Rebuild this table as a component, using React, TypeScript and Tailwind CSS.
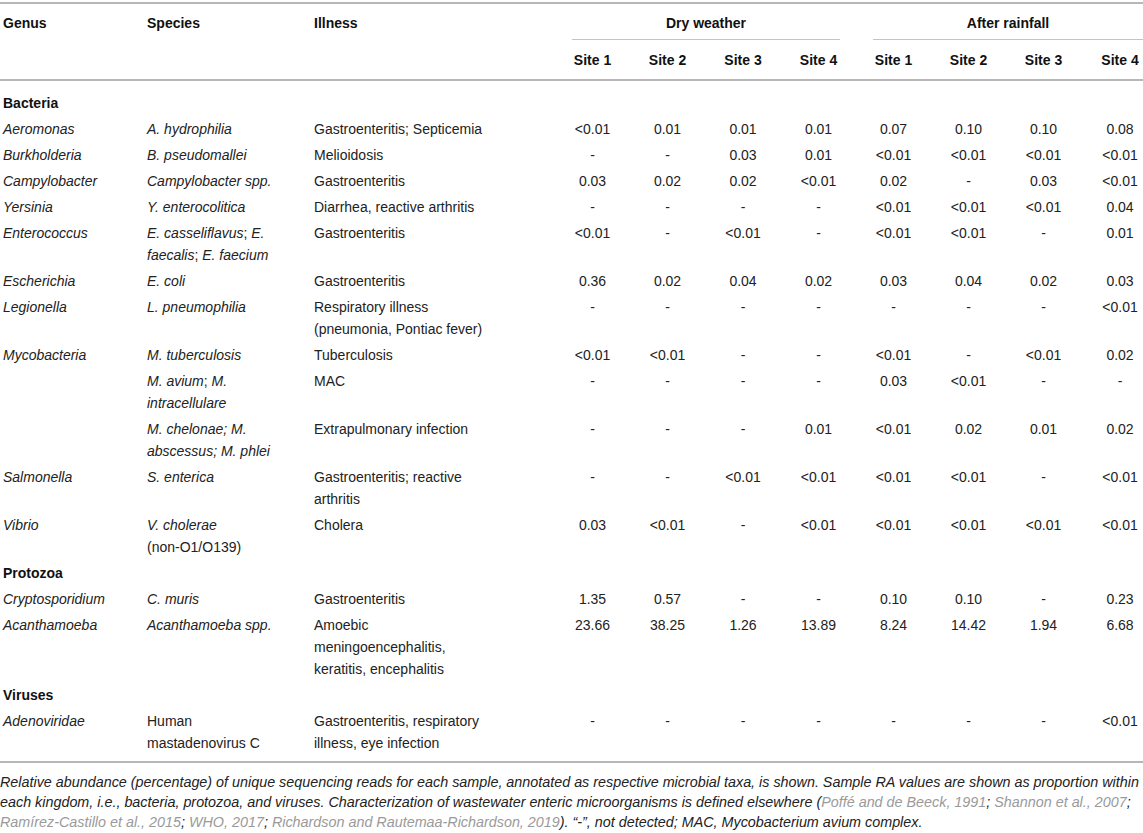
import React from 'react';

type DataRow = {
  kind: 'data';
  genus: string;
  species: React.ReactNode;
  illness: React.ReactNode;
  values: string[];
};

type SectionRow = { kind: 'section'; label: string };

const cols =
  'grid grid-cols-[144px_167px_244px_75px_75px_76px_75px_75px_75px_75px_1fr]';

const rows: (DataRow | SectionRow)[] = [
  { kind: 'section', label: 'Bacteria' },
  {
    kind: 'data',
    genus: 'Aeromonas',
    species: <i>A. hydrophilia</i>,
    illness: 'Gastroenteritis; Septicemia',
    values: ['<0.01', '0.01', '0.01', '0.01', '0.07', '0.10', '0.10', '0.08'],
  },
  {
    kind: 'data',
    genus: 'Burkholderia',
    species: <i>B. pseudomallei</i>,
    illness: 'Melioidosis',
    values: ['-', '-', '0.03', '0.01', '<0.01', '<0.01', '<0.01', '<0.01'],
  },
  {
    kind: 'data',
    genus: 'Campylobacter',
    species: <i>Campylobacter spp.</i>,
    illness: 'Gastroenteritis',
    values: ['0.03', '0.02', '0.02', '<0.01', '0.02', '-', '0.03', '<0.01'],
  },
  {
    kind: 'data',
    genus: 'Yersinia',
    species: <i>Y. enterocolitica</i>,
    illness: 'Diarrhea, reactive arthritis',
    values: ['-', '-', '-', '-', '<0.01', '<0.01', '<0.01', '0.04'],
  },
  {
    kind: 'data',
    genus: 'Enterococcus',
    species: (
      <>
        <i>E. casseliflavus</i>; <i>E.</i>
        <br />
        <i>faecalis</i>; <i>E. faecium</i>
      </>
    ),
    illness: 'Gastroenteritis',
    values: ['<0.01', '-', '<0.01', '-', '<0.01', '<0.01', '-', '0.01'],
  },
  {
    kind: 'data',
    genus: 'Escherichia',
    species: <i>E. coli</i>,
    illness: 'Gastroenteritis',
    values: ['0.36', '0.02', '0.04', '0.02', '0.03', '0.04', '0.02', '0.03'],
  },
  {
    kind: 'data',
    genus: 'Legionella',
    species: <i>L. pneumophilia</i>,
    illness: (
      <>
        Respiratory illness
        <br />
        (pneumonia, Pontiac fever)
      </>
    ),
    values: ['-', '-', '-', '-', '-', '-', '-', '<0.01'],
  },
  {
    kind: 'data',
    genus: 'Mycobacteria',
    species: <i>M. tuberculosis</i>,
    illness: 'Tuberculosis',
    values: ['<0.01', '<0.01', '-', '-', '<0.01', '-', '<0.01', '0.02'],
  },
  {
    kind: 'data',
    genus: '',
    species: (
      <>
        <i>M. avium</i>; <i>M.</i>
        <br />
        <i>intracellulare</i>
      </>
    ),
    illness: 'MAC',
    values: ['-', '-', '-', '-', '0.03', '<0.01', '-', '-'],
  },
  {
    kind: 'data',
    genus: '',
    species: (
      <>
        <i>M. chelonae; M.</i>
        <br />
        <i>abscessus; M. phlei</i>
      </>
    ),
    illness: 'Extrapulmonary infection',
    values: ['-', '-', '-', '0.01', '<0.01', '0.02', '0.01', '0.02'],
  },
  {
    kind: 'data',
    genus: 'Salmonella',
    species: <i>S. enterica</i>,
    illness: (
      <>
        Gastroenteritis; reactive
        <br />
        arthritis
      </>
    ),
    values: ['-', '-', '<0.01', '<0.01', '<0.01', '<0.01', '-', '<0.01'],
  },
  {
    kind: 'data',
    genus: 'Vibrio',
    species: (
      <>
        <i>V. cholerae</i>
        <br />
        (non-O1/O139)
      </>
    ),
    illness: 'Cholera',
    values: ['0.03', '<0.01', '-', '<0.01', '<0.01', '<0.01', '<0.01', '<0.01'],
  },
  { kind: 'section', label: 'Protozoa' },
  {
    kind: 'data',
    genus: 'Cryptosporidium',
    species: <i>C. muris</i>,
    illness: 'Gastroenteritis',
    values: ['1.35', '0.57', '-', '-', '0.10', '0.10', '-', '0.23'],
  },
  {
    kind: 'data',
    genus: 'Acanthamoeba',
    species: <i>Acanthamoeba spp.</i>,
    illness: (
      <>
        Amoebic
        <br />
        meningoencephalitis,
        <br />
        keratitis, encephalitis
      </>
    ),
    values: ['23.66', '38.25', '1.26', '13.89', '8.24', '14.42', '1.94', '6.68'],
  },
  { kind: 'section', label: 'Viruses' },
  {
    kind: 'data',
    genus: 'Adenoviridae',
    species: (
      <>
        Human
        <br />
        mastadenovirus C
      </>
    ),
    illness: (
      <>
        Gastroenteritis, respiratory
        <br />
        illness, eye infection
      </>
    ),
    values: ['-', '-', '-', '-', '-', '-', '-', '<0.01'],
  },
];

const sites = ['Site 1', 'Site 2', 'Site 3', 'Site 4', 'Site 1', 'Site 2', 'Site 3', 'Site 4'];

export default function App() {
  return (
    <div className="w-[1143px] h-[833px] overflow-hidden bg-white text-[14px] text-[#222] font-['Liberation_Sans',Arial,sans-serif]">
      {/* Table header */}
      <div className="mt-[2px] border-t-2 border-[#b7b7b7]">
        <div className={`${cols} pt-[8px] leading-[22px] font-bold text-[#111]`}>
          <div className="pl-[3px]">Genus</div>
          <div className="pl-[3px]">Species</div>
          <div className="pl-[3px]">Illness</div>
          <div className="col-span-4 ml-[17px] mr-[16px] pb-[5px] border-b border-[#c4c4c4] text-center">
            Dry weather
          </div>
          <div className="col-span-4 ml-[17px] pb-[5px] border-b border-[#c4c4c4] text-center">
            After rainfall
          </div>
        </div>
        <div className={`${cols} pt-[9px] pb-[8px] leading-[22px] font-bold text-[#111] border-b-2 border-[#b7b7b7]`}>
          <div />
          <div />
          <div />
          {sites.map((s, i) => (
            <div key={i} className={`text-center whitespace-nowrap ${i === 7 ? 'pl-[16px]' : ''}`}>
              {s}
            </div>
          ))}
        </div>
      </div>

      {/* Table body */}
      <div className="pt-[9px] pb-[5px] border-b-2 border-[#b7b7b7]">
        {rows.map((r, idx) =>
          r.kind === 'section' ? (
            <div key={idx} className="py-[2px] leading-[22px] pl-[3px] font-bold text-[#111]">
              {r.label}
            </div>
          ) : (
            <div key={idx} className={`${cols} py-[2px] leading-[22px]`}>
              <div className="pl-[3px] italic whitespace-nowrap">{r.genus}</div>
              <div className="pl-[3px] whitespace-nowrap">{r.species}</div>
              <div className="pl-[3px] whitespace-nowrap">{r.illness}</div>
              {r.values.map((v, i) => (
                <div key={i} className={`text-center whitespace-nowrap ${i === 7 ? 'pl-[16px]' : ''}`}>
                  {v}
                </div>
              ))}
            </div>
          ),
        )}
      </div>

      {/* Footnote */}
      <p className="pt-[9px] text-[14.35px] leading-[20px] italic text-[#222] whitespace-nowrap">
        Relative abundance (percentage) of unique sequencing reads for each sample, annotated as
        respective microbial taxa, is shown. Sample RA values are shown as proportion within
        <br />
        each kingdom, i.e., bacteria, protozoa, and viruses. Characterization of wastewater enteric
        microorganisms is defined elsewhere (
        <span className="text-[#9a9a9a]">Poffé and de Beeck, 1991</span>;{' '}
        <span className="text-[#9a9a9a]">Shannon et al., 2007</span>;
        <br />
        <span className="text-[#9a9a9a]">Ramírez-Castillo et al., 2015</span>;{' '}
        <span className="text-[#9a9a9a]">WHO, 2017</span>;{' '}
        <span className="text-[#9a9a9a]">Richardson and Rautemaa-Richardson, 2019</span>). “-”, not
        detected; MAC, Mycobacterium avium complex.
      </p>
    </div>
  );
}
